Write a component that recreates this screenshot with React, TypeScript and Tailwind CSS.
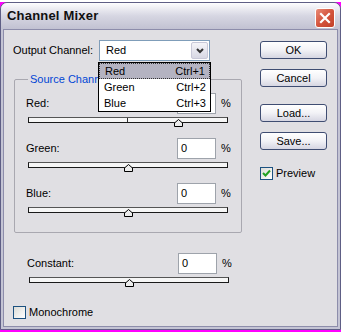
import React from "react";

const font = "font-['Liberation_Sans',Arial,sans-serif]";

function Thumb({ pos }: { pos: number }) {
  // pos = pixel offset of the thumb centre from the track's left edge
  return (
    <svg
      width="9"
      height="8"
      viewBox="0 0 9 8"
      className="absolute top-[1px]"
      style={{ left: pos - 5 }}
    >
      <polygon
        points="4.5,0.5 8.5,4 8.5,7.5 0.5,7.5 0.5,4"
        fill="#ececec"
        stroke="#000"
        strokeWidth="1"
      />
    </svg>
  );
}

function Track({ pos, tick }: { pos: number; tick?: boolean }) {
  return (
    <div className="relative ml-[2px] mt-[3px] h-[6px] w-[200px] border border-[#1a1a1a] border-t-[#555] bg-[#f6f6f6]">
      {tick && <div className="absolute left-[98px] top-0 h-full w-px bg-[#333]" />}
      <Thumb pos={pos} />
    </div>
  );
}

function SliderRow({
  label,
  value,
  pos,
  tick,
  last,
}: {
  label: string;
  value: string;
  pos: number;
  tick?: boolean;
  last?: boolean;
}) {
  return (
    <div className={last ? "" : "mb-[15px]"}>
      <div className="flex h-[21px] items-center">
        <span className="w-[151px]">{label}</span>
        <div className="flex h-[21px] w-[39px] items-center border border-[#9ea3ab] bg-white pl-[3px]">
          {value}
        </div>
        <span className="ml-[5px]">%</span>
      </div>
      <Track pos={pos} tick={tick} />
    </div>
  );
}

function Button({ children, className = "" }: { children: React.ReactNode; className?: string }) {
  return (
    <button
      className={`flex h-[18px] w-[67px] items-center justify-center rounded-[3px] border border-[#3f4d72] bg-gradient-to-b from-white via-[#f2f2f6] to-[#d6d6e2] text-[11px] text-black ${className}`}
    >
      {children}
    </button>
  );
}

function CheckBox({ checked }: { checked?: boolean }) {
  return (
    <div className="flex h-[13px] w-[13px] items-center justify-center border border-[#1c5180] bg-gradient-to-br from-[#dcdcd7] to-white">
      {checked && (
        <svg width="9" height="9" viewBox="0 0 9 9">
          <path d="M1 4 L3.5 6.5 L8 1.5" fill="none" stroke="#21a121" strokeWidth="2" />
        </svg>
      )}
    </div>
  );
}

export default function App() {
  const channels = [
    { name: "Red", key: "Ctrl+1" },
    { name: "Green", key: "Ctrl+2" },
    { name: "Blue", key: "Ctrl+3" },
  ];

  return (
    <div className={`h-[332px] w-[341px] bg-[#ff00ff] ${font} text-[11px] text-black`}>
      <div className="mt-[2px] flex h-[328px] w-[341px] flex-col rounded-t-[7px] border border-[#5e5e85] bg-[#c4c4d4]">
        {/* title bar */}
        <div className="flex h-[26px] shrink-0 items-center justify-between rounded-t-[6px] bg-gradient-to-b from-[#fdfdfe] via-[#d6d6e2] to-[#c2c2d2] pl-[6px] pr-[5px]">
          <span className="text-[13px] font-bold tracking-[0.2px] text-[#101010]">Channel Mixer</span>
          <div className="mt-[3px] flex h-[20px] w-[20px] items-center justify-center rounded-[3px] border border-white bg-gradient-to-br from-[#e88a76] via-[#d4543d] to-[#c24028]">
            <svg width="12" height="12" viewBox="0 0 12 12">
              <path d="M2 2 L10 10 M10 2 L2 10" stroke="#fff" strokeWidth="2.2" strokeLinecap="square" />
            </svg>
          </div>
        </div>

        {/* client area */}
        <div className="mx-[2px] mb-[2px] flex flex-1 border border-[#8d8dab] bg-[#e0dfe3]">
          {/* left column */}
          <div className="w-[256px] pl-[9px] pt-[10px]">
            <div className="flex items-center">
              <span className="w-[86px]">Output Channel:</span>
              <div className="relative flex h-[21px] w-[111px] items-center border border-[#7f9db9] bg-white pl-[6px]">
                <span className="flex-1">Red</span>
                <div className="mr-px flex h-[17px] w-[17px] items-center justify-center rounded-[2px] border border-[#c8c8d8] bg-gradient-to-b from-[#f4f4f8] to-[#d8d8e4]">
                  <svg width="8" height="6" viewBox="0 0 8 6">
                    <path d="M1 1 L4 4 L7 1" fill="none" stroke="#333" strokeWidth="2" />
                  </svg>
                </div>

                {/* open list */}
                <div className="absolute left-[-2px] top-[21px] z-10 w-[113px] border border-black bg-white">
                  {channels.map((c, i) => (
                    <div
                      key={c.name}
                      className={`flex h-[16px] items-center justify-between pl-[5px] pr-[4px] ${
                        i === 0 ? "border border-dotted border-[#333] bg-[#b4b3c1] pl-[4px] pr-[3px]" : ""
                      }`}
                    >
                      <span>{c.name}</span>
                      <span>{c.key}</span>
                    </div>
                  ))}
                </div>
              </div>
            </div>

            <fieldset className="ml-px mt-[12px] w-[228px] rounded-[2px] border border-[#a9a8b0]">
              <legend className="ml-[13px] px-[2px] leading-[13px] text-[#0046d5]">Source Channels</legend>
              <div className="pb-[19px] pl-[11px] pt-[7px]">
                <SliderRow label="Red:" value="100" pos={150} tick />
                <SliderRow label="Green:" value="0" pos={100} />
                <SliderRow label="Blue:" value="0" pos={100} last />
              </div>
            </fieldset>

            <div className="mt-[20px] pl-[14px]">
              <SliderRow label="Constant:" value="0" pos={100} last />
            </div>

            <div className="mt-[21px] flex items-center">
              <CheckBox />
              <span className="ml-[3px]">Monochrome</span>
            </div>
          </div>

          {/* right column */}
          <div className="flex flex-col pt-[11px]">
            <Button>OK</Button>
            <Button className="mt-[10px]">Cancel</Button>
            <Button className="mt-[17px]">Load...</Button>
            <Button className="mt-[10px]">Save...</Button>
            <div className="mt-[15px] flex items-center">
              <CheckBox checked />
              <span className="ml-[3px]">Preview</span>
            </div>
          </div>
        </div>
      </div>
    </div>
  );
}
